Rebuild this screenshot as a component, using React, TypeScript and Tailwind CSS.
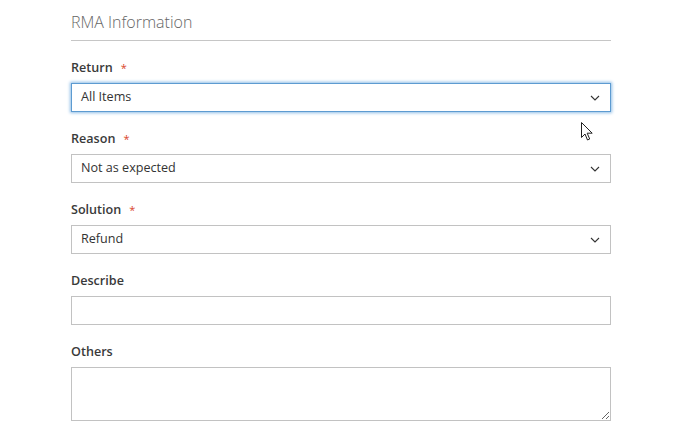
import type { ReactNode } from "react";

const font = { fontFamily: '"Open Sans", "Noto Sans", Arial, sans-serif' };

function Chevron() {
  return (
    <svg
      width="10"
      height="6"
      viewBox="0 0 10 6"
      className="pointer-events-none absolute right-[10px] top-1/2 -translate-y-1/2"
    >
      <path d="M1 1l4 4 4-4" fill="none" stroke="#333" strokeWidth="1.1" />
    </svg>
  );
}

function Field({
  label,
  required = false,
  children,
}: {
  label: string;
  required?: boolean;
  children: ReactNode;
}) {
  return (
    <div className="mb-[18px]">
      <label className="mb-[7px] flex items-baseline text-[12.6px] font-semibold leading-[17px] text-[#3a3a3a]">
        {label}
        {required && (
          <span className="ml-[8px] text-[11px] font-normal text-[#d9452a]">*</span>
        )}
      </label>
      {children}
    </div>
  );
}

function Select({ value, focused = false }: { value: string; focused?: boolean }) {
  return (
    <div
      className={`relative flex h-[29px] items-center border bg-white pl-[9px] text-[12.6px] text-[#333] ${
        focused
          ? "border-[#5d9bd1] shadow-[0_0_3px_1px_#8fbde6]"
          : "border-[#c2c2c2]"
      }`}
    >
      {value}
      <Chevron />
    </div>
  );
}

export default function App() {
  return (
    <div className="relative h-[433px] w-[693px] overflow-hidden bg-white" style={font}>
      <div className="ml-[71px] w-[540px] pt-[11px]">
        <div className="mb-[18px] border-b border-[#c6c6c6] pb-[7px] text-[16px] font-light leading-[22px] text-[#666]">
          RMA Information
        </div>

        <Field label="Return" required>
          <Select value="All Items" focused />
        </Field>
        <Field label="Reason" required>
          <Select value="Not as expected" />
        </Field>
        <Field label="Solution" required>
          <Select value="Refund" />
        </Field>
        <Field label="Describe">
          <input
            type="text"
            className="block h-[29px] w-full border border-[#c2c2c2] bg-white px-[9px] text-[12.6px] text-[#333] outline-none"
          />
        </Field>
        <Field label="Others">
          <textarea className="block h-[54px] w-full resize-y border border-[#c2c2c2] bg-white px-[9px] text-[12.6px] text-[#333] outline-none" />
        </Field>
      </div>

      {/* mouse pointer */}
      <svg
        width="14"
        height="20"
        viewBox="0 0 14 20"
        className="absolute left-[581px] top-[122px]"
      >
        <path
          d="M0.5 0.5v15l3.5-3.5 2.5 6 2.2-1-2.5-5.8h5z"
          fill="white"
          stroke="#222"
          strokeWidth="1"
          strokeLinejoin="round"
        />
      </svg>
    </div>
  );
}
